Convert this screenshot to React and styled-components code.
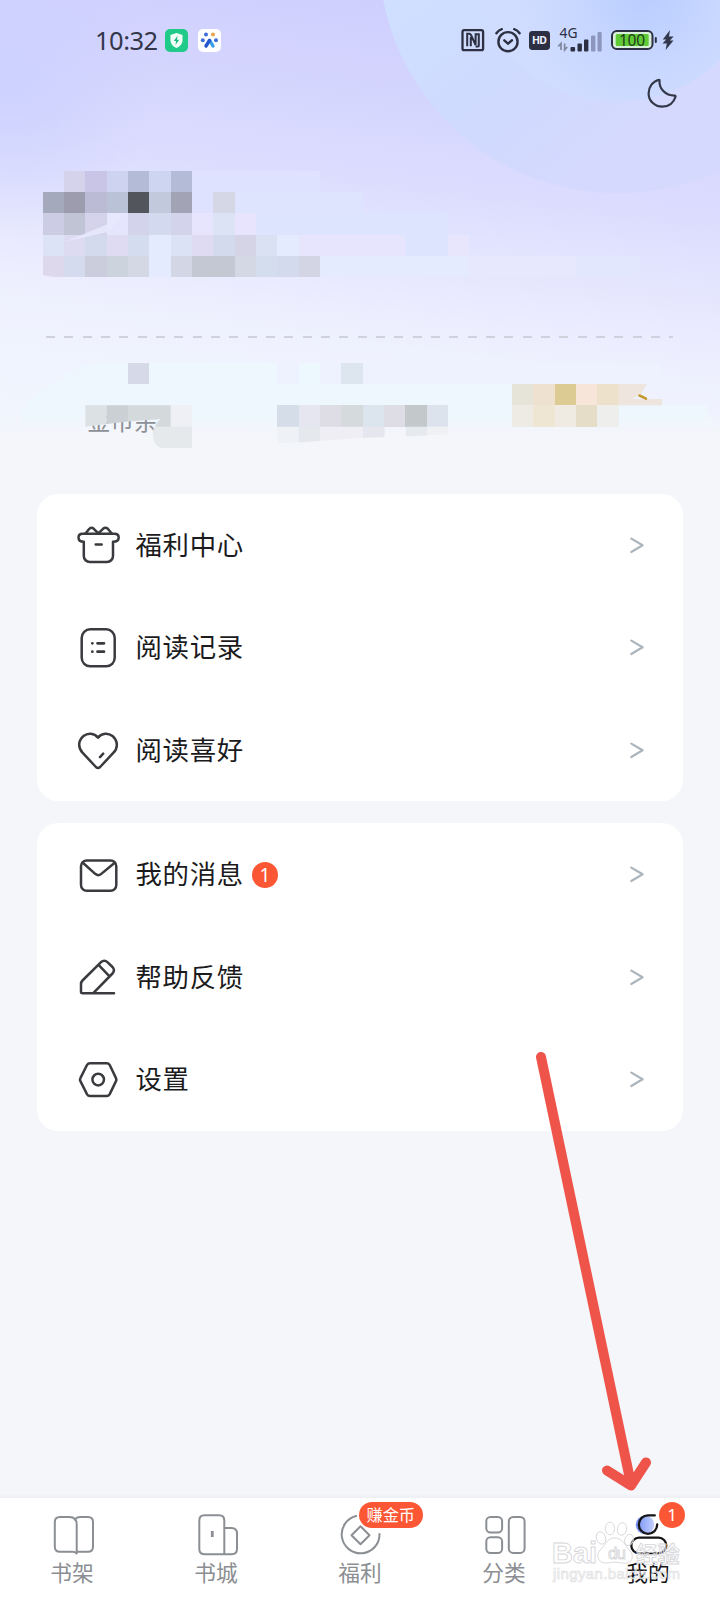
import React from 'react';
import styled, { createGlobalStyle } from 'styled-components';

const cjk = "'Noto Sans CJK SC', sans-serif";

const Global = createGlobalStyle`
  * { box-sizing: border-box; }
  body { margin: 0; background: #f4f6fa; font-family: ${cjk}; }
  svg { display: block; flex: none; overflow: visible; }
`;

const Page = styled.div`
  position: relative;
  display: flex;
  flex-direction: column;
  width: 720px;
  height: 1600px;
  overflow: hidden;
  background: #f4f6fa;
`;

const Header = styled.header`
  position: relative;
  height: 493.5px;
  flex: none;
`;

const HeaderLayer = styled.svg`
  position: absolute;
  left: 0;
  top: 0;
`;

const HeaderContent = styled.div`
  position: relative;
  display: flex;
  flex-direction: column;
`;

const StatusBar = styled.div`
  display: flex;
  align-items: center;
  height: 80px;
  padding: 0 46px 0 95px;
`;

const Clock = styled.time`
  width: 64px;
  margin-right: 6px;
  font: 450 25.5px/30px 'Noto Sans', sans-serif;
  letter-spacing: -0.5px;
  color: #34364a;
  white-space: nowrap;
`;

const AppIcons = styled.div`
  display: flex;
  gap: 10px;
`;

const StatusIcons = styled.div`
  display: flex;
  align-items: center;
  margin-left: auto;
`;

const Glyph = styled.svg`
  margin-left: ${(p) => p.$gap || 0}px;
`;

const ThemeBar = styled.div`
  display: flex;
  justify-content: flex-end;
  height: 256px;
  padding: 0 43.5px;
  margin-top: -2.5px;
`;

const Divider = styled.div`
  height: 2px;
  margin: 2px 47px 0 46px;
  background: repeating-linear-gradient(90deg, #d0d1dc 0 9px, transparent 9px 18.33px);
`;

const Balance = styled.span`
  margin: 65.5px 0 0 87px;
  font-size: 23.5px;
  line-height: 34px;
  color: #8c9096;
`;

const Menu = styled.main`
  display: flex;
  flex-direction: column;
  gap: 22px;
  padding: 0 37px;
`;

const Card = styled.section`
  border-radius: 21px;
  background: #fff;
`;

const Row = styled.div`
  display: flex;
  align-items: center;
  height: 102.5px;
  padding: 0 39.5px 0 38.5px;
`;

const RowLabel = styled.span`
  margin: -2px 0 0 16px;
  font-size: 26.4px;
  letter-spacing: 0.7px;
  line-height: 40px;
  color: #1b1b1d;
`;

const Chevron = styled.svg`
  margin-left: auto;
`;

const Badge = styled.span`
  display: flex;
  align-items: center;
  justify-content: center;
  width: ${(p) => p.$width || 26}px;
  height: 26px;
  border-radius: 14px;
  background: #fc5735;
  color: #fff;
  font: 400 ${(p) => p.$size || 19}px/26px 'Noto Sans', ${cjk};
`;

const RowBadge = styled(Badge)`
  margin: 1px 0 0 8px;
`;

const TabBar = styled.nav`
  display: flex;
  height: 102.5px;
  margin-top: auto;
  background: #fff;
  box-shadow: 0 -1px 4px rgba(60, 65, 80, 0.06);
`;

const Tab = styled.div`
  position: relative;
  display: flex;
  flex: 1;
  flex-direction: column;
  align-items: center;
  padding-top: 15px;
  color: ${(p) => (p.$active ? '#151517' : '#8b8e92')};
`;

const TabIcon = styled.svg`
  margin-left: -1px;
`;

const TabLabel = styled.span`
  margin-top: 0.5px;
  font-size: 21.7px;
  line-height: 30px;
`;

const TabBadge = styled(Badge)`
  position: absolute;
  left: ${(p) => p.$left}px;
  top: 4px;
`;

const Overlay = styled.svg`
  position: absolute;
  left: ${(p) => p.$x}px;
  top: ${(p) => p.$y}px;
  pointer-events: none;
`;

const CELL = 64 / 3;

/* Pixelated account details: [row, first column, columns, colour] */
const cells = [
  [8, 3, 1, '#d5d2ec'], [8, 4, 1, '#c8c5e6'], [8, 5, 1, '#ced3f0'], [8, 6, 1, '#b4bbd7'], [8, 7, 1, '#ced5f0'], [8, 8, 1, '#b4bbd7'], [8, 9, 6, '#dee2fe'],
  [9, 2, 1, '#a5a9bc'], [9, 3, 1, '#9c9cae'], [9, 4, 1, '#bbbbd5'], [9, 5, 1, '#bac2d7'], [9, 6, 1, '#52555b'], [9, 7, 1, '#c3c9dc'], [9, 8, 1, '#a2a3b5'], [9, 9, 1, '#dfe2fe'], [9, 10, 1, '#d6d7e6'], [9, 11, 6, '#dee3fe'],
  [10, 2, 1, '#cccce4'], [10, 3, 1, '#c1c4d5'], [10, 4, 1, '#d5d3ec'], [10, 5, 1, '#e5e5fd'], [10, 6, 1, '#d4d3ec'], [10, 7, 1, '#d3d9ee'], [10, 8, 1, '#d4d3ec'], [10, 9, 1, '#e6e5fd'], [10, 10, 1, '#dce3f5'], [10, 11, 1, '#e8e4fd'], [10, 12, 9, '#dde5fe'],
  [11, 2, 1, '#dde3f6'], [11, 3, 1, '#dcdbf2'], [11, 4, 1, '#d4daee'], [11, 5, 1, '#dedbf2'], [11, 6, 1, '#d4ddf0'], [11, 7, 1, '#e4ebfe'], [11, 8, 1, '#dce2f6'], [11, 9, 1, '#dedbf2'], [11, 10, 1, '#d4daee'], [11, 11, 1, '#d5d4e6'], [11, 12, 1, '#dae1f3'], [11, 13, 1, '#e4ebfe'], [11, 14, 5, '#e6e5fd'], [11, 19, 2, '#dde5fe'], [11, 21, 1, '#e8e6fc'],
  [12, 2, 1, '#ddd8eb'], [12, 3, 1, '#d5dbef'], [12, 4, 1, '#cbcddd'], [12, 5, 1, '#cdd3dd'], [12, 6, 1, '#d4d8e4'], [12, 7, 1, '#e4ebfe'], [12, 8, 1, '#d3d6e4'], [12, 9, 2, '#c3c8d2'], [12, 11, 1, '#d4d8e4'], [12, 12, 1, '#d3dded'], [12, 13, 1, '#d4daee'], [12, 14, 1, '#d3d4e4'], [12, 15, 7, '#e5ebfe'], [12, 22, 5, '#e7e7fd'], [12, 27, 3, '#e2e7fe'],
  [17, 6, 1, '#d6d9e7'], [17, 13, 1, '#eef2fe'], [17, 14, 1, '#edf8fe'], [17, 15, 1, '#eef2fe'], [17, 16, 1, '#dde6ee'], [17, 17, 14, '#eef2fe'],
  [18, 24, 1, '#e6e3d9'], [18, 25, 1, '#efe1cf'], [18, 26, 1, '#dccb92'], [18, 27, 1, '#f7e5d9'], [18, 28, 1, '#eee1cb'],
  [19, 8, 1, '#eef0f5'], [19, 13, 1, '#d5dde9'], [19, 14, 1, '#e5e6ef'], [19, 15, 1, '#dedde6'], [19, 16, 1, '#d5dadc'], [19, 17, 1, '#dce5ee'], [19, 18, 1, '#dedde6'], [19, 19, 1, '#c3c8ca'], [19, 20, 1, '#dce3ed'],
  [19, 24, 1, '#eeebe5'], [19, 25, 1, '#eee6d3'], [19, 26, 1, '#efebe2'], [19, 27, 1, '#e6ddc9'], [19, 28, 1, '#eeeeed'],
];

const HeaderBackdrop = () => (
  <HeaderLayer width="720" height="494" viewBox="0 0 720 494">
    <defs>
      <linearGradient id="sky" gradientUnits="userSpaceOnUse" x1="380" y1="0" x2="325" y2="440">
        <stop offset="0" stopColor="#cfcffe" />
        <stop offset="0.2" stopColor="#d4d5fe" />
        <stop offset="0.38" stopColor="#dbdcfe" />
        <stop offset="0.55" stopColor="#e4e5fe" />
        <stop offset="0.7" stopColor="#ecedfe" />
        <stop offset="0.8" stopColor="#eff2fe" />
        <stop offset="1" stopColor="#f1f5fe" />
      </linearGradient>
      <radialGradient id="glow" gradientUnits="userSpaceOnUse" cx="10" cy="85" r="150">
        <stop offset="0" stopColor="#c8ceff" stopOpacity="0.7" />
        <stop offset="1" stopColor="#c8ceff" stopOpacity="0" />
      </radialGradient>
      <linearGradient id="ring" gradientUnits="userSpaceOnUse" x1="400" y1="0" x2="560" y2="195">
        <stop offset="0" stopColor="#cfdfff" />
        <stop offset="0.55" stopColor="#cfdafe" />
        <stop offset="1" stopColor="#d5d9fe" />
      </linearGradient>
      <radialGradient id="disc" gradientUnits="userSpaceOnUse" cx="645" cy="-5" r="130">
        <stop offset="0" stopColor="#b9cdff" />
        <stop offset="0.6" stopColor="#c9d8ff" />
        <stop offset="1" stopColor="#d1ddff" />
      </radialGradient>
      <linearGradient id="fade" x1="0" y1="0" x2="0" y2="1">
        <stop offset="0" stopColor="#f4f6fa" stopOpacity="0" />
        <stop offset="1" stopColor="#f4f6fa" />
      </linearGradient>
    </defs>
    <rect width="720" height="494" fill="url(#sky)" />
    <rect width="200" height="240" fill="url(#glow)" />
    <circle cx="617" cy="-45" r="238" fill="url(#ring)" />
    <circle cx="617" cy="-45" r="147" fill="url(#disc)" />
    <path d="M22 426V411Q30 394 62 379Q80 363 100 362.7H277.3V384H533V405.3H706L714 426.7Z" fill="#eef7fe" />
    <rect y="415" width="720" height="21" fill="url(#fade)" />
    <rect y="435" width="720" height="59" fill="#f4f6fa" />
  </HeaderLayer>
);

const Mosaic = () => (
  <HeaderLayer width="720" height="494" viewBox="0 0 720 494">
    <g shapeRendering="crispEdges">
      {cells.map(([row, col, span, fill]) => (
        <rect key={`${row}-${col}`} x={col * CELL} y={row * CELL} width={span * CELL} height={CELL} fill={fill} />
      ))}
    </g>
    <path d="M64 242 108 224V213H123L117 223 108 232Z" fill="#e8e9fd" opacity=".85" />
    <path d="M42.7 275 56 277.3H42.7Z" fill="#ecebfd" />
    <path d="M85.3 405.3H106.7V424L85.3 426.7Z" fill="#dce1e3" />
    <path d="M106.7 405.3H128V421.5L106.7 424Z" fill="#cad0d3" />
    <path d="M128 405.3H170.7V427H155Q157 421 161 419L128 421.5Z" fill="#d4d9dc" />
    <path d="M154 426.7H192V448H161Q150 443 154 426.7Z" fill="#e5e9ec" />
    <path d="M277.3 426.7H298.7V442L277.3 443.5Z" fill="#eef2f6" />
    <path d="M298.7 426.7H320V441L298.7 442.5Z" fill="#e5e9ed" />
    <path d="M320 426.7H363V437.5L320 441Z" fill="#eeeef4" />
    <path d="M363 426.7H384.5V437L363 438Z" fill="#e6e6ee" />
    <path d="M405.7 426.7H427V435.5L405.7 436.5Z" fill="#e6eaee" />
    <path d="M427 426.7H448V434L427 435.5Z" fill="#eff1f5" />
    <path d="M618.7 384H647L641 394 632 399H662V405.3H618.7Z" fill="#eee5df" />
    <path d="M639.5 395.5 646 398.7" stroke="#c49a30" strokeWidth="2.6" strokeLinecap="round" />
  </HeaderLayer>
);

const StatusGlyphs = () => (
  <StatusIcons>
    <Glyph width="24" height="24" viewBox="0 0 24 24" fill="none" stroke="#2d3043" strokeWidth="2.3">
      <rect x="1.5" y="2.2" width="20.6" height="20" rx="1.8" />
      <path d="M6.2 18.3V5.8H8.4Q9.4 5.8 10 7L14.6 17V6.3H17.8V17.8Q17.8 18.5 17 18.5H14.6M9.8 18.3V9" strokeWidth="2" />
    </Glyph>
    <Glyph $gap={10} width="26" height="25" viewBox="0 0 26 25" fill="none" stroke="#2d3043" strokeWidth="2.4" strokeLinecap="round">
      <circle cx="13" cy="13.7" r="9.6" />
      <path d="M1.4 5.2Q3.6 2.2 6.8 1.2M24.6 5.2Q22.4 2.2 19.2 1.2M9.3 12.3 13 15.6 17 12.3" />
    </Glyph>
    <Glyph $gap={8} width="21" height="19" viewBox="0 0 21 19">
      <rect width="21" height="19" rx="3.4" fill="#2d3043" />
      <text x="10.5" y="13.2" textAnchor="middle" fill="#eef0ff" fontFamily="Noto Sans" fontWeight="700" fontSize="10.5" textLength="15">HD</text>
    </Glyph>
    <Glyph $gap={7} width="46" height="26" viewBox="0 0 46 26">
      <text x="2.5" y="10.5" fill="#2d3043" fontFamily="Noto Sans" fontSize="13.5" textLength="18" lengthAdjust="spacingAndGlyphs">4G</text>
      <path d="M4 23V16.5L1.2 19.5M7.6 16.5V23L10.2 20" fill="none" stroke="#81869d" strokeWidth="1.7" />
      <g fill="#2d3043">
        <rect x="13.5" y="20" width="4.6" height="4.5" rx="1" />
        <rect x="20.5" y="16.5" width="4.4" height="8" rx="1" />
        <rect x="27" y="12.5" width="4.4" height="12" rx="1" />
      </g>
      <g fill="#8d97bd">
        <rect x="34" y="8.5" width="4.4" height="16" rx="1" />
        <rect x="40.5" y="5" width="4.2" height="19.5" rx="1" />
      </g>
    </Glyph>
    <Glyph $gap={8} width="47" height="20" viewBox="0 0 47 20">
      <rect x="1" y="1" width="40.5" height="18" rx="4.8" fill="#d8efd9" stroke="#2d3043" strokeWidth="2" />
      <rect x="4.7" y="4" width="33" height="12" rx="1.5" fill="#60c936" />
      <rect x="43.8" y="7" width="2" height="6" rx="1" fill="#2d3043" />
      <text x="21" y="15.5" textAnchor="middle" fill="#1c3a1a" fontFamily="Noto Sans" fontSize="15.5" textLength="26">100</text>
    </Glyph>
    <Glyph $gap={4} width="12" height="20" viewBox="0 0 12 20" fill="#34384c">
      <path d="M8 0 .8 9.5H4.2L.5 13.4H4.8L3.6 20 11.5 10.5H7.9L11.6 6.5H7Z" />
    </Glyph>
  </StatusIcons>
);

const GiftIcon = () => (
  <>
    <path d="M7.8 18.8C4.3 18.8 2.5 17 2.5 14.5S4.2 10.7 6.5 10.7H38.5C41 10.7 42.7 12 42.7 14.5S41 18.8 37 18.8V33A6 6 0 0 1 31 39H13.8A6 6 0 0 1 7.8 33Z" />
    <path d="M9.5 10.5 13.3 5.8Q15.5 3.8 17.8 5.8L22.3 10.4 27 5.8Q29.5 3.8 31.8 5.8L35.7 10.5M19.7 21.5H25.7" />
  </>
);
const RecordIcon = () => (
  <>
    <rect x="5.7" y="4.3" width="33" height="37" rx="8.5" />
    <path d="M16.3 18.3H16.4M16.3 26.7H16.4M21.5 18.3H28M21.5 26.7H28" strokeWidth="2.7" />
  </>
);
const HeartIcon = () => (
  <path d="M22 9.6C18 4.6 11.5 4.7 7.5 8 1.9 12.8 2 19.8 6.5 24.7L19.9 39Q22 41 24.1 39L37.5 24.7C42.2 19.8 42 12.8 36.5 8 32.3 4.7 26 4.6 22 9.6ZM24 29.2 27.2 25.7" />
);
const MailIcon = () => (
  <>
    <rect x="5" y="8.5" width="35.3" height="30.3" rx="5.7" />
    <path d="M6.8 10.8 19.5 22.1Q22.3 24.3 25 22.1L38.7 10.8" />
  </>
);
const PencilIcon = () => (
  <path d="M38 38.3H6.5Q5 38.3 5 36.8V29Q5 27 6.5 25.5L24.8 7.3Q28.3 4.2 31.7 7.3L36.5 12Q39.5 15.2 36.5 18.5L17.5 37.8M23.5 10.8 33.3 21.2" />
);
const SettingsIcon = () => (
  <>
    <path d="M14 6.2H30.7Q32.6 6.2 33.6 7.8L40 21.1Q40.7 22.6 40 24.1L33.6 37.4Q32.6 39 30.7 39H14Q12.1 39 11.1 37.4L4.4 24.1Q3.6 22.6 4.4 21.1L11.1 7.8Q12.1 6.2 14 6.2Z" />
    <circle cx="22.2" cy="22.6" r="5.8" />
  </>
);

const groups = [
  [['福利中心', GiftIcon], ['阅读记录', RecordIcon], ['阅读喜好', HeartIcon]],
  [['我的消息', MailIcon, 1], ['帮助反馈', PencilIcon], ['设置', SettingsIcon]],
];

const MenuRow = ({ label, Icon, count }) => (
  <Row>
    <svg width="44" height="44" viewBox="0 0 44 44" fill="none" stroke="#3a3b3e" strokeWidth="2.5" strokeLinecap="round" strokeLinejoin="round">
      <Icon />
    </svg>
    <RowLabel>{label}</RowLabel>
    {count && <RowBadge>{count}</RowBadge>}
    <Chevron width="14" height="16" viewBox="0 0 14 16" fill="none" stroke="#abb5be" strokeWidth="2.2" strokeLinecap="round" strokeLinejoin="round">
      <path d="M1.3 1.6 12.6 8.3 1.3 15" />
    </Chevron>
  </Row>
);

const ShelfIcon = () => (
  <path d="M26.7 40.5Q25 38.8 22.5 38.8H10Q4.8 38.8 4.8 33.8V9Q4.8 4 10 4H19.5Q26.7 4 26.7 11.5ZM25 6.8Q26.8 4 30 4H38Q43 4 43 9V33.8Q43 38.8 38 38.8H27" />
);
const StoreIcon = () => (
  <>
    <path d="M30.3 41.3H11Q5.3 41.3 5.3 36V7.5Q5.3 2.2 10.6 2.2H25Q30.3 2.2 30.3 7.5ZM30.3 15H37.5Q43 15 43 20.5V35.8Q43 41.3 37.5 41.3H30.3" />
    <path d="M18.3 18V24" strokeWidth="2.8" strokeLinecap="butt" />
  </>
);
const CoinIcon = () => (
  <>
    <path d="M18.2 3A18.9 18.9 0 1 0 41.5 21" />
    <path d="M22.5 13.2 31.5 22.2 22.5 31.2 13.5 22.2Z" />
  </>
);
const CategoryIcon = () => (
  <>
    <rect x="4.3" y="3.9" width="15.8" height="15.6" rx="4.2" />
    <rect x="4.3" y="24.3" width="15.8" height="15.6" rx="4.2" />
    <rect x="26.8" y="3.9" width="15.8" height="36" rx="4.5" />
  </>
);
const ProfileIcon = () => (
  <>
    <defs>
      <linearGradient id="face" x1="0" x2="1">
        <stop offset="0" stopColor="#7490f5" />
        <stop offset="1" stopColor="#c4d1fd" />
      </linearGradient>
    </defs>
    <circle cx="19" cy="11.8" r="9.3" fill="url(#face)" stroke="none" />
    <path d="M28.8 2.4H22.3A9.2 9.2 0 1 0 31.2 11.5" />
    <rect x="5.3" y="24.7" width="35" height="15.5" rx="7.7" />
  </>
);

const tabs = [
  ['书架', ShelfIcon],
  ['书城', StoreIcon],
  ['福利', CoinIcon, { text: '赚金币', left: 71, width: 63.5, size: 16.2 }],
  ['分类', CategoryIcon],
  ['我的', ProfileIcon, { text: '1', left: 83, width: 26, size: 17 }],
];

const ArrowMark = () => (
  <Overlay $x={530} $y={1045} width="130" height="450" viewBox="530 1045 130 450" fill="none" stroke="#ef544b" strokeWidth="10" strokeLinecap="round" strokeLinejoin="round">
    <path d="M541 1057 631 1484M607 1470.5 631 1485.5 646 1462.5" />
  </Overlay>
);

const Watermark = () => (
  <Overlay $x={550} $y={1518} width="135" height="66" viewBox="550 1518 135 66" fill="#fff" fillOpacity=".45" stroke="#d6d6d9" strokeWidth=".9" fontFamily={cjk}>
    <text x="552" y="1562.5" fontFamily="Liberation Sans" fontWeight="700" fontSize="29" textLength="45">Bai</text>
    <g>
      <ellipse cx="601" cy="1538" rx="4.6" ry="6.3" transform="rotate(-18 601 1538)" />
      <ellipse cx="610" cy="1528.5" rx="4.6" ry="6.3" />
      <ellipse cx="622" cy="1529" rx="4.6" ry="6.3" transform="rotate(10 622 1529)" />
      <ellipse cx="629" cy="1540" rx="4.3" ry="5.8" transform="rotate(20 629 1540)" />
      <path d="M613 1538C606 1540 605 1546 600 1550 595 1556 599 1564 607 1563Q614 1561 622 1563C632 1565 635 1556 630 1551 625 1546 623 1537 613 1538Z" />
    </g>
    <text x="608" y="1559" fontFamily="Liberation Sans" fontSize="17" textLength="18">du</text>
    <text x="636" y="1561.5" fontWeight="700" fontSize="21.8">经验</text>
    <text x="553" y="1579" fontFamily="Liberation Sans" fontSize="15" textLength="127" stroke="#e0e0e2" strokeWidth=".7">jingyan.baidu.com</text>
  </Overlay>
);

export default function App() {
  return (
    <Page>
      <Global />
      <Header>
        <HeaderBackdrop />
        <HeaderContent>
          <StatusBar>
            <Clock>10:32</Clock>
            <AppIcons>
              <svg width="23" height="23" viewBox="0 0 23 23">
                <rect width="23" height="23" rx="5" fill="#20cb89" />
                <path d="M11.5 4 17.5 6V12Q17 16.5 11.5 19 6 16.5 5.5 12V6Z" fill="#f2fff9" />
                <path d="M12.5 6.7 8.8 12H11L10.5 16 14.2 10.7H12Z" fill="#20b97f" />
              </svg>
              <svg width="23" height="23" viewBox="0 0 23 23">
                <rect width="23" height="23" rx="5" fill="#fff" />
                <g fill="#3d6ed6">
                  <circle cx="8" cy="5.6" r="2" />
                  <circle cx="4.8" cy="11.3" r="2" />
                  <circle cx="18" cy="11.3" r="2" />
                </g>
                <circle cx="15" cy="5.6" r="2" fill="#e5a446" />
                <path d="M11.8 11.5 15 17" stroke="#39a0ea" strokeWidth="3.4" strokeLinecap="round" />
                <path d="M11.4 11.5 8 17" stroke="#2555cf" strokeWidth="3.4" strokeLinecap="round" />
              </svg>
            </AppIcons>
            <StatusGlyphs />
          </StatusBar>
          <ThemeBar>
            <svg width="30" height="30" viewBox="0 0 30 30" fill="none" stroke="#333748" strokeWidth="2.2" strokeLinejoin="round">
              <path d="M12 1.8Q12.6 1.6 12.5 2.4C11.8 10.5 18.2 17.6 27.6 17.6Q28.8 17.6 28.5 18.8C26.8 24.9 21.6 28.7 15.3 28.7 7.6 28.7 1.6 22.8 1.6 15.4 1.6 8.8 5.8 3.3 12 1.8Z" />
            </svg>
          </ThemeBar>
          <Divider />
          <Balance>金币余</Balance>
        </HeaderContent>
        <Mosaic />
      </Header>
      <Menu>
        {groups.map((rows, i) => (
          <Card key={i}>
            {rows.map(([label, Icon, count]) => (
              <MenuRow key={label} label={label} Icon={Icon} count={count} />
            ))}
          </Card>
        ))}
      </Menu>
      <TabBar>
        {tabs.map(([label, Icon, badge]) => (
          <Tab key={label} $active={label === '我的'}>
            <TabIcon width="44" height="44" viewBox="0 0 44 44" fill="none" stroke="currentColor" strokeWidth={label === '我的' ? 2.3 : 2} strokeLinecap="round" strokeLinejoin="round">
              <Icon />
            </TabIcon>
            <TabLabel>{label}</TabLabel>
            {badge && <TabBadge $left={badge.left} $width={badge.width} $size={badge.size}>{badge.text}</TabBadge>}
          </Tab>
        ))}
      </TabBar>
      <ArrowMark />
      <Watermark />
    </Page>
  );
}
